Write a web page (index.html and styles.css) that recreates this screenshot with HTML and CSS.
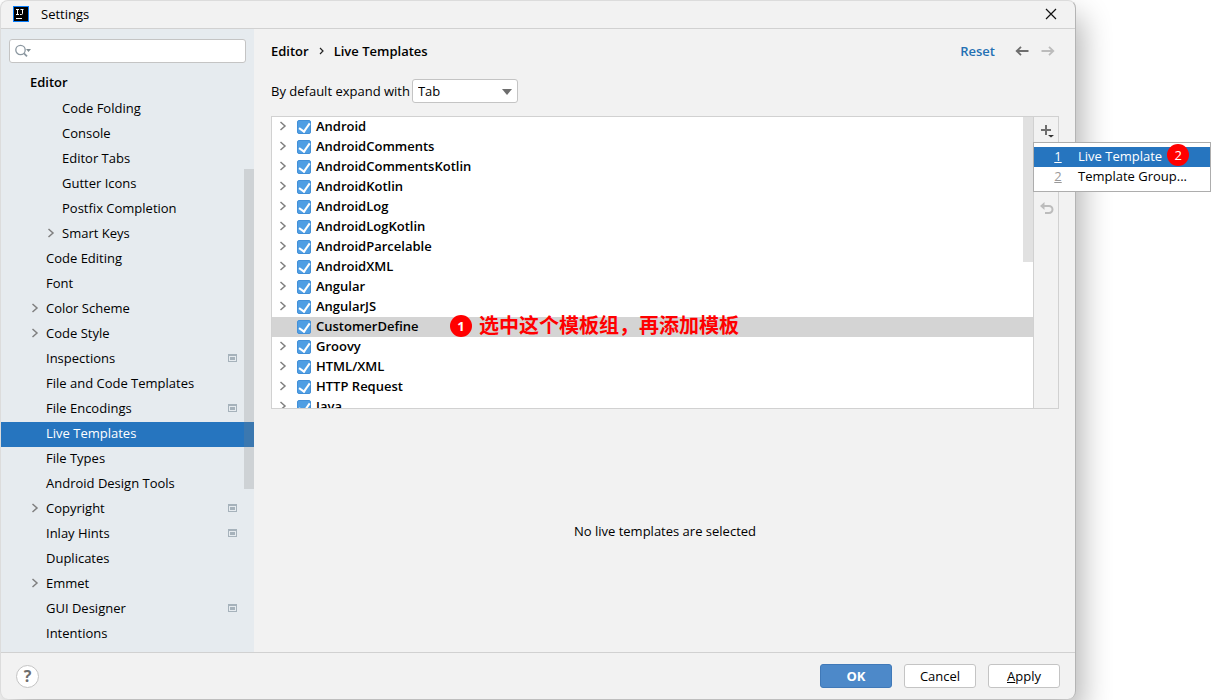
FILE: index.html
```html
<!DOCTYPE html>
<html lang="en">
<head>
<meta charset="utf-8">
<title>Settings</title>
<link rel="stylesheet" href="styles.css">
</head>
<body>
<svg class="defs" aria-hidden="true">
  <symbol id="chevron" viewBox="0 0 8 10"><path d="M1.5 1l4.500 4-4.500 4" fill="none" stroke="currentColor" stroke-width="1.500"/></symbol>
  <symbol id="project" viewBox="0 0 9 8"><path d="M0 0h9v8H0zM1 2v5h7V2z" fill="currentColor" fill-rule="evenodd"/><path d="M2 3h5v3H2z" fill="currentColor"/></symbol>
</svg>
<div class="dialog">
  <header class="titlebar">
    <svg class="logo" viewBox="0 0 16 16" aria-hidden="true"><path fill="#087cfa" d="M0 0h16v16H0z"/><path d="M1 1h14v14H1z"/><path d="M3 3.500h3M4.500 3.500v5M3 8.500h3M7.500 3.500h3M9.500 3.500v4q0 1-1 1h-1.500M3 12.500h6" fill="none" stroke="#fff"/></svg>
    <span class="title">Settings</span>
    <button class="icon-button" aria-label="Close"><svg width="12" height="12" viewBox="0 0 12 12"><path d="M1 1l10 10M11 1L1 11" fill="none" stroke="#111" stroke-width="1.200"/></svg></button>
  </header>
  <div class="body">
    <aside class="sidebar">
      <div class="search">
        <svg width="18" height="14" viewBox="0 0 18 14" aria-hidden="true"><circle cx="5.500" cy="6" r="4.700" fill="none" stroke="#8b97a0" stroke-width="1.300"/><path d="M9 9.300l3 3" stroke="#8b97a0" stroke-width="1.800"/><path d="M11 5h5l-2.500 3z" fill="#7f8b91"/></svg>
        <input type="text" aria-label="Search settings">
      </div>
      <nav aria-label="Settings categories">
        <h2 class="group">Editor</h2>
        <ul class="tree">
          <li class="deep"><a href="#">Code Folding</a></li>
          <li class="deep"><a href="#">Console</a></li>
          <li class="deep"><a href="#">Editor Tabs</a></li>
          <li class="deep"><a href="#">Gutter Icons</a></li>
          <li class="deep"><a href="#">Postfix Completion</a></li>
          <li class="deep"><svg class="chevron"><use href="#chevron"/></svg><a href="#">Smart Keys</a></li>
          <li><a href="#">Code Editing</a></li>
          <li><a href="#">Font</a></li>
          <li><svg class="chevron"><use href="#chevron"/></svg><a href="#">Color Scheme</a></li>
          <li><svg class="chevron"><use href="#chevron"/></svg><a href="#">Code Style</a></li>
          <li><a href="#">Inspections</a><svg class="project"><use href="#project"/></svg></li>
          <li><a href="#">File and Code Templates</a></li>
          <li><a href="#">File Encodings</a><svg class="project"><use href="#project"/></svg></li>
          <li class="selected"><a href="#" aria-current="page">Live Templates</a></li>
          <li><a href="#">File Types</a></li>
          <li><a href="#">Android Design Tools</a></li>
          <li><svg class="chevron"><use href="#chevron"/></svg><a href="#">Copyright</a><svg class="project"><use href="#project"/></svg></li>
          <li><a href="#">Inlay Hints</a><svg class="project"><use href="#project"/></svg></li>
          <li><a href="#">Duplicates</a></li>
          <li><svg class="chevron"><use href="#chevron"/></svg><a href="#">Emmet</a></li>
          <li><a href="#">GUI Designer</a><svg class="project"><use href="#project"/></svg></li>
          <li><a href="#">Intentions</a></li>
        </ul>
      </nav>
      <div class="side-thumb"></div>
    </aside>
    <main class="main">
      <div class="crumbs">
        <span>Editor</span>
        <svg width="5" height="8" viewBox="0 0 5 8" aria-hidden="true"><path d="M1 1l3 3-3 3" fill="none" stroke="#222" stroke-width="1.200"/></svg>
        <h1>Live Templates</h1>
        <a class="reset" href="#">Reset</a>
        <button class="icon-button" aria-label="Back"><svg width="14" height="10" viewBox="0 0 14 10"><path d="M13.500 5H2M6 .8L1.700 5 6 9.200" fill="none" stroke="#6e6e6e" stroke-width="1.800"/></svg></button>
        <button class="icon-button" aria-label="Forward" disabled><svg width="14" height="10" viewBox="0 0 14 10"><path d="M.5 5H12M8 .8L12.300 5 8 9.200" fill="none" stroke="#bcbcbc" stroke-width="1.800"/></svg></button>
      </div>
      <div class="expand">
        <label for="expand-key">By default expand with</label>
        <div class="combo">
          <select id="expand-key"><option>Tab</option><option>Enter</option><option>Space</option></select>
          <svg width="10" height="6" viewBox="0 0 10 6" aria-hidden="true"><path d="M0 0h10L5 6z" fill="#6e6e6e"/></svg>
        </div>
      </div>
      <div class="templates">
        <ul class="list">
          <li><svg class="chevron"><use href="#chevron"/></svg><label><input type="checkbox" checked>Android</label></li>
          <li><svg class="chevron"><use href="#chevron"/></svg><label><input type="checkbox" checked>AndroidComments</label></li>
          <li><svg class="chevron"><use href="#chevron"/></svg><label><input type="checkbox" checked>AndroidCommentsKotlin</label></li>
          <li><svg class="chevron"><use href="#chevron"/></svg><label><input type="checkbox" checked>AndroidKotlin</label></li>
          <li><svg class="chevron"><use href="#chevron"/></svg><label><input type="checkbox" checked>AndroidLog</label></li>
          <li><svg class="chevron"><use href="#chevron"/></svg><label><input type="checkbox" checked>AndroidLogKotlin</label></li>
          <li><svg class="chevron"><use href="#chevron"/></svg><label><input type="checkbox" checked>AndroidParcelable</label></li>
          <li><svg class="chevron"><use href="#chevron"/></svg><label><input type="checkbox" checked>AndroidXML</label></li>
          <li><svg class="chevron"><use href="#chevron"/></svg><label><input type="checkbox" checked>Angular</label></li>
          <li><svg class="chevron"><use href="#chevron"/></svg><label><input type="checkbox" checked>AngularJS</label></li>
          <li class="current"><label><input type="checkbox" checked>CustomerDefine</label>
            <div class="note"><span class="badge">1</span><span lang="zh-CN">选中这个模板组，再添加模板</span></div></li>
          <li><svg class="chevron"><use href="#chevron"/></svg><label><input type="checkbox" checked>Groovy</label></li>
          <li><svg class="chevron"><use href="#chevron"/></svg><label><input type="checkbox" checked>HTML/XML</label></li>
          <li><svg class="chevron"><use href="#chevron"/></svg><label><input type="checkbox" checked>HTTP Request</label></li>
          <li><svg class="chevron"><use href="#chevron"/></svg><label><input type="checkbox" checked>Java</label></li>
        </ul>
        <div class="list-thumb"></div>
        <div class="toolbar">
          <button class="icon-button" aria-label="Add"><svg width="14" height="14" viewBox="0 0 14 14"><path d="M6 0v10M1 5h10" stroke="#6e6e6e" stroke-width="2"/><path d="M8 10h6l-3 2.500z" fill="#333"/></svg></button>
          <button class="icon-button" aria-label="Restore defaults" disabled><svg width="14" height="14" viewBox="0 0 14 14"><path d="M3 4h6a3.500 3.500 0 0 1 0 7H5" fill="none" stroke="#bcbcbc" stroke-width="2"/><path d="M0 4L4.500 0v8z" fill="#bcbcbc"/></svg></button>
          <div class="menu" role="menu">
            <button class="active" role="menuitem"><u>1</u><span>Live Template</span><span class="badge">2</span></button>
            <button role="menuitem"><u>2</u><span>Template Group...</span></button>
          </div>
        </div>
      </div>
      <div class="empty">No live templates are selected</div>
    </main>
  </div>
  <footer class="footer">
    <button class="help" aria-label="Help">?</button>
    <button class="button primary">OK</button>
    <button class="button">Cancel</button>
    <button class="button"><u>A</u>pply</button>
  </footer>
</div>
</body>
</html>
```
FILE: styles.css
```css
* { box-sizing: border-box; }

body {
  margin: 0;
  height: 100vh;
  padding: 0 135px 1px 0;
  overflow: hidden;
  background: #fff;
  color: #000;
  font: 13px/20px "Open Sans", "Noto Sans CJK SC", sans-serif;
}

ul, h1, h2 { margin: 0; padding: 0; list-style: none; font-size: inherit; font-weight: inherit; }
button, input, select { font: inherit; color: inherit; }
a { color: inherit; text-decoration: none; }
svg { flex: none; display: block; }
.defs { position: absolute; width: 0; height: 0; }

.icon-button {
  display: flex;
  padding: 0;
  border: 0;
  background: none;
}

.dialog {
  display: flex;
  flex-direction: column;
  height: 100%;
  border: 1px solid #b4b4b4;
  border-top-color: #dcdcdc;
  border-left-color: #dcdcdc;
  border-bottom: 0;
  border-radius: 8px;
  background: #f2f2f2;
  box-shadow: 6px 16px 30px rgba(0, 0, 0, .3);
}

.titlebar {
  display: flex;
  align-items: center;
  height: 28px;
  padding: 0 18px 2px 12px;
  border-bottom: 1px solid #d1d1d1;
}
.logo { width: 16px; height: 16px; }
.title { flex: 1; margin-left: 12px; }

.body { flex: 1; display: flex; min-height: 0; }

.sidebar {
  position: relative;
  flex: none;
  width: 253px;
  padding-top: 10px;
  background: #e6ebef;
}
.search {
  display: flex;
  align-items: center;
  height: 24px;
  margin: 0 8px;
  padding-left: 5px;
  border: 1px solid #c4c4c4;
  border-radius: 3px;
  background: #fff;
}
.search input { flex: 1; min-width: 0; border: 0; outline: 0; background: none; }
.group { margin: 7px 0 3px; padding-left: 29px; line-height: 24px; font-weight: 600; }
.tree li {
  display: flex;
  align-items: center;
  height: 25px;
  padding: 0 17px 3px 45px;
}
.tree .deep { padding-left: 61px; }
.tree .selected { background: #2675bf; color: #fff; }
.chevron { width: 8px; height: 10px; color: #7f7f7f; }
.tree .chevron { margin: 0 7px 0 -15px; }
.project { width: 9px; height: 8px; margin-left: auto; color: #a6b2bb; }
.side-thumb {
  position: absolute;
  top: 140px;
  right: 0;
  width: 10px;
  height: 320px;
  background: rgba(128, 128, 128, .24);
}

.main {
  flex: 1;
  display: flex;
  flex-direction: column;
  min-width: 0;
  padding: 12px 16px 0 17px;
}
.crumbs { display: flex; align-items: center; gap: 10px; font-weight: 600; }
.reset { margin: 0 10px 0 auto; color: #2470b3; }
.crumbs .icon-button + .icon-button { margin: 0 4px 0 2px; }

.expand { display: flex; align-items: center; gap: 2px; margin: 18px 0 13px; }
.combo { position: relative; width: 106px; }
.combo select {
  display: block;
  width: 100%;
  height: 24px;
  padding: 0 5px;
  border: 1px solid #c4c4c4;
  border-radius: 3px;
  background: #fff;
  appearance: none;
}
.combo svg { position: absolute; top: 10px; right: 6px; pointer-events: none; }

.templates {
  position: relative;
  flex: 6 1 0;
  display: flex;
  min-height: 0;
  border: 1px solid #d1d1d1;
}
.list { flex: 1; overflow: hidden; background: #fff; font-weight: 600; }
.list li {
  position: relative;
  display: flex;
  align-items: center;
  height: 20px;
  padding: 0 0 2px 25px;
}
.list .current { background: #d4d4d4; }
.list .chevron { margin: 0 10px 0 -18px; }
.list label { display: flex; align-items: center; gap: 5px; }
.list input {
  display: grid;
  place-items: center;
  width: 14px;
  height: 14px;
  margin: 2px 0 0;
  border: 1px solid #4390d8;
  border-radius: 2px;
  background: #4f9ee3;
  appearance: none;
}
.list input:checked::after {
  content: "";
  width: 5px;
  height: 9px;
  margin-bottom: 3px;
  border: solid #fff;
  border-width: 0 2px 2px 0;
  transform: rotate(35deg);
}
.list-thumb {
  position: absolute;
  top: 0;
  right: 25px;
  width: 10px;
  height: 145px;
  background: #e1e1e1;
}

.note {
  position: absolute;
  top: -4px;
  left: 178px;
  display: flex;
  align-items: center;
  gap: 7px;
  color: #f00;
  font-size: 20px;
  font-weight: bold;
  line-height: 26px;
  white-space: nowrap;
}
.badge {
  display: grid;
  place-items: center;
  width: 22px;
  height: 22px;
  border-radius: 50%;
  background: #f00;
  color: #fff;
  font-size: 13px;
  line-height: 20px;
}

.toolbar {
  position: relative;
  display: flex;
  flex-direction: column;
  gap: 63px;
  width: 25px;
  padding: 8px 6px;
  border-left: 1px solid #d1d1d1;
}
.menu {
  position: absolute;
  z-index: 1;
  top: 25px;
  left: -1px;
  width: 178px;
  padding: 4px 0;
  border: 1px solid #adadad;
  background: #fff;
}
.menu button {
  display: flex;
  align-items: center;
  width: 100%;
  height: 20px;
  padding: 0 0 2px 20px;
  border: 0;
  background: none;
}
.menu u { width: 8px; margin-right: 16px; color: #999; }
.menu .active { background: #2675bf; color: #fff; }
.menu .active u { color: #fff; }
.menu .badge { margin: -3px 0 0 5px; }

.empty {
  flex: 5 1 0;
  display: grid;
  place-items: center;
}

.footer {
  display: flex;
  align-items: center;
  gap: 12px;
  height: 47px;
  padding: 0 15px;
  border-top: 1px solid #d1d1d1;
}
.help {
  width: 23px;
  height: 23px;
  margin-right: auto;
  padding: 0;
  border: 1px solid #c4c4c4;
  border-radius: 50%;
  background: #fff;
  color: #6e6e6e;
  font-size: 16px;
  font-weight: bold;
  line-height: 20px;
}
.button {
  width: 72px;
  height: 24px;
  padding: 0;
  border: 1px solid #c4c4c4;
  border-radius: 3px;
  background: #fff;
}
.primary {
  border-color: #4079b8;
  background: #4d89c9;
  color: #fff;
  font-weight: bold;
}
```
